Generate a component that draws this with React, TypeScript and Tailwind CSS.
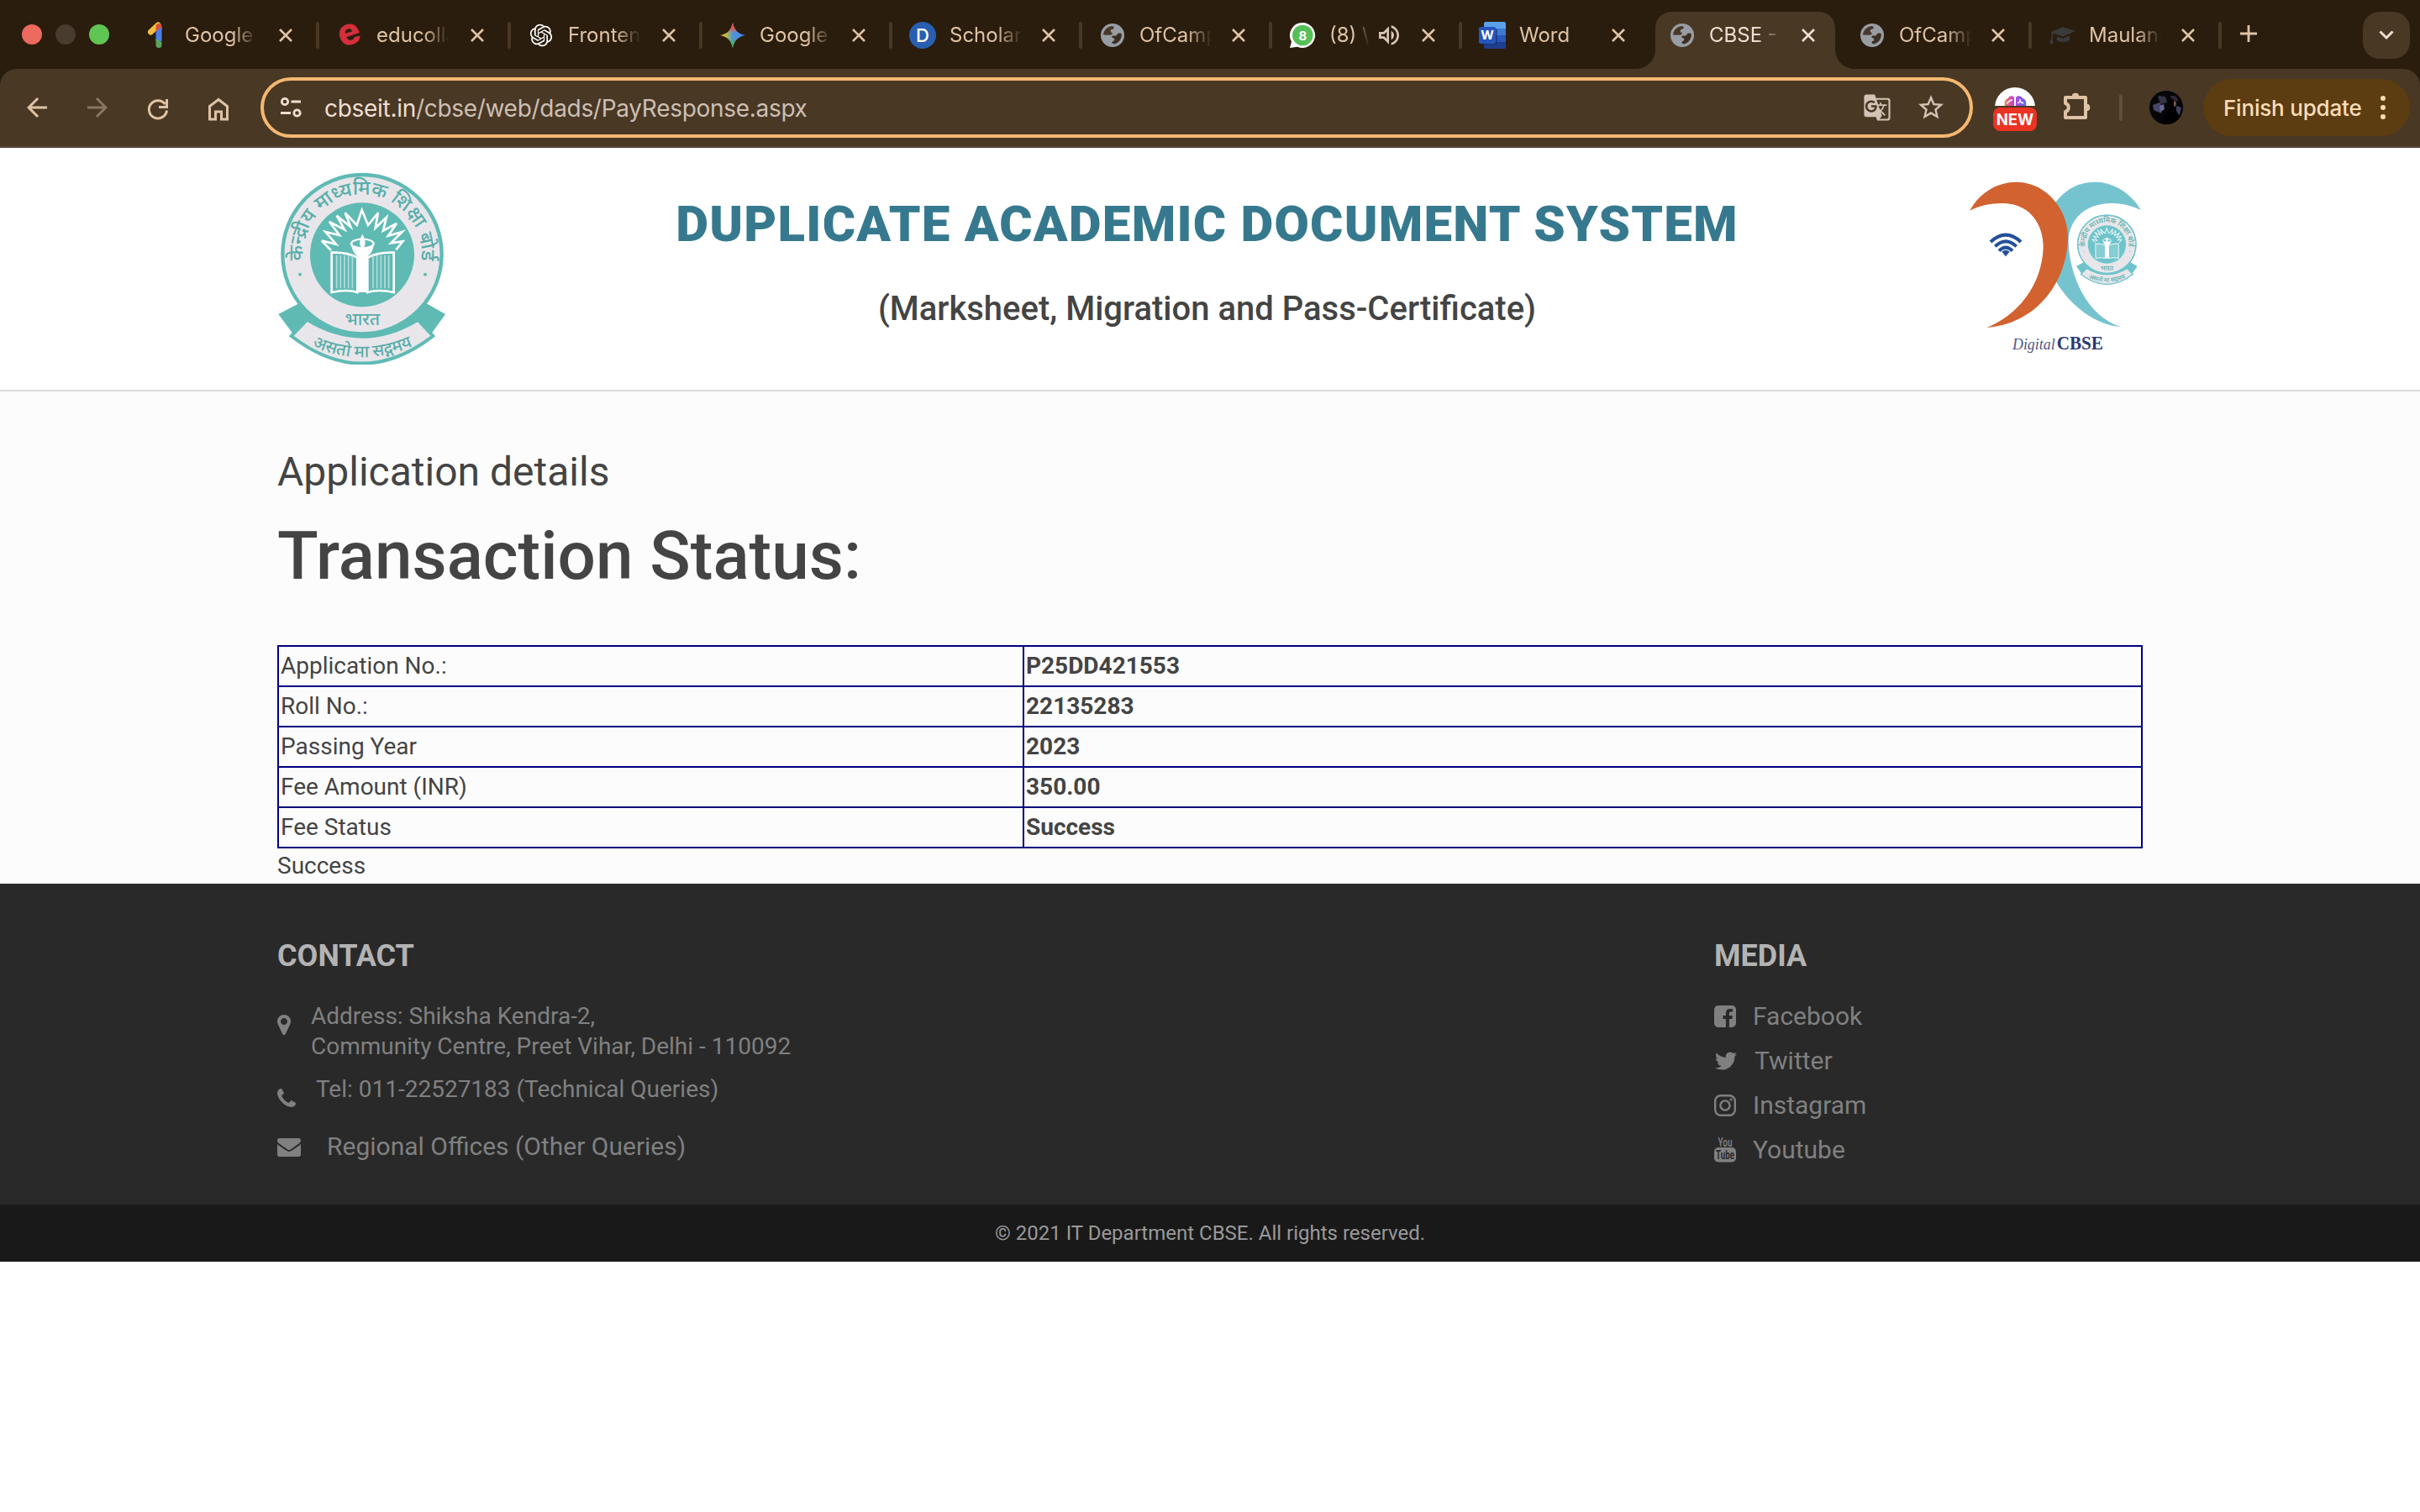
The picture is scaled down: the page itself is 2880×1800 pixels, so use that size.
import type { ReactNode } from 'react';
import { RiOpenaiFill } from 'react-icons/ri';
import { MdArrowBack, MdArrowForward, MdGTranslate, MdOutlineVolumeUp, MdStarBorder } from 'react-icons/md';

/* ---------- tab icons ---------- */

function GoogleOne() {
  return (
    <svg viewBox="0 0 32 32" className="size-8">
      <path d="M16 2.5 7.500 10.500" stroke="#f2bd42" strokeWidth="7" strokeLinecap="round" transform="translate(0 1.500)" />
      <path d="M13.500 12V5.500a3.500 3.500 0 0 1 7 0V9z" fill="#d94f3d" />
      <path d="M13.500 12 20.500 6v17h-7z" fill="#4a80ec" />
      <path d="M13.500 20 20.500 24v3.500a3.500 3.500 0 0 1-7 0z" fill="#58a65c" />
    </svg>
  );
}

function EducollaIcon() {
  return (
    <span className="flex size-8 -rotate-[18deg] items-center justify-center font-['Inter'] text-[44px] leading-[32px] font-extrabold text-[#d32f3c]">
      <span className="-mt-2.5">e</span>
    </span>
  );
}

function GeminiIcon() {
  return (
    <svg viewBox="0 0 32 32" className="size-8">
      <defs>
        <linearGradient id="gem" x1="0" y1="0" x2="1" y2="0">
          <stop offset="0" stopColor="#f2bd42" />
          <stop offset=".25" stopColor="#b8b94a" />
          <stop offset=".5" stopColor="#4f93d8" />
          <stop offset="1" stopColor="#4285f4" />
        </linearGradient>
        <linearGradient id="gemTop" x1="0" y1="0" x2="0" y2="1">
          <stop offset="0" stopColor="#e94b3c" />
          <stop offset=".22" stopColor="#e0564a" />
          <stop offset=".42" stopColor="#d96c6c" stopOpacity="0" />
          <stop offset=".6" stopColor="#4fae5b" stopOpacity="0" />
          <stop offset=".85" stopColor="#4fae5b" />
        </linearGradient>
      </defs>
      <path d="M16 1C18 10 22 14 31 16 22 18 18 22 16 31 14 22 10 18 1 16 10 14 14 10 16 1z" fill="url(#gem)" />
      <path d="M16 1C18 10 22 14 31 16 22 18 18 22 16 31 14 22 10 18 1 16 10 14 14 10 16 1z" fill="url(#gemTop)" />
    </svg>
  );
}

function LetterD() {
  return (
    <span className="flex size-8 items-center justify-center rounded-full bg-[#285fb0] font-['Inter'] text-[22px] leading-none font-medium text-white">
      D
    </span>
  );
}

function Globe() {
  return (
    <svg viewBox="0 0 32 32" className="size-8">
      <circle cx="16" cy="16" r="14" fill="#989da3" />
      <path d="M5 15.500C5.500 9.500 10 5.500 16 5l2 1.500-1.500 2.300-2.800.8.300 2.600 2.200 1.300-1.700 2-4 .200z" fill="#48382a" />
      <path d="M16 16.500h4.500l1.500-2.500 3-.800 1.800 1.300c.400 5.500-3 10.500-8.800 12l-2.500-1 .500-2.500 2.200-.500v-2.500l-3-1.500z" fill="#3c2f22" />
    </svg>
  );
}

function WhatsApp() {
  return (
    <svg viewBox="0 0 32 32" className="size-8">
      <path d="M16 1a15 15 0 1 1-6 28.700L1 31l2-7.500A15 15 0 0 1 16 1z" fill="#fff" />
      <circle cx="16.300" cy="16" r="12.300" fill="#57bf58" />
      <text x="16.300" y="21.500" textAnchor="middle" fontFamily="Inter" fontWeight="700" fontSize="15" fill="#fff">8</text>
    </svg>
  );
}

function WordIcon() {
  return (
    <svg viewBox="0 0 32 32" className="size-8">
      <path d="M8 0h22a2 2 0 0 1 2 2v6H6V2a2 2 0 0 1 2-2z" fill="#5aa1ea" />
      <path d="M6 8h26v8H6z" fill="#3b79d2" />
      <path d="M6 16h26v8H6z" fill="#2858b8" />
      <path d="M6 24h26v6a2 2 0 0 1-2 2H8a2 2 0 0 1-2-2z" fill="#1f3e8c" />
      <path d="M6 8h14a2 2 0 0 1 2 2v17H6z" fill="#14295f" opacity=".55" />
      <rect y="6" width="20" height="20" rx="2" fill="#2655ba" />
      <text x="10" y="21" textAnchor="middle" fontFamily="Inter" fontWeight="700" fontSize="15" fill="#fff">W</text>
    </svg>
  );
}

function GradCap() {
  return (
    <svg viewBox="0 0 32 32" className="size-8" fill="#3a3a39">
      <path d="M17 6 32 11 17 17.500 6 13.800 5 17 4.500 21 6 25l-3.500 2L1 24l2-4 .800-4L3 12z" />
      <path d="M10 17.500 17 20l8-3.500v5c-2 3-13 3.500-15.500 0z" />
    </svg>
  );
}

/* ---------- browser chrome ---------- */

function CloseIcon() {
  return (
    <svg viewBox="0 0 16 16" className="size-4 shrink-0" fill="none" stroke="currentColor" strokeWidth="2.600">
      <path d="M1 1l14 14M15 1 1 15" />
    </svg>
  );
}

type Tab = { title: string; icon: ReactNode; wide?: boolean; active?: boolean; audio?: boolean; noSep?: boolean };

const tabs: Tab[] = [
  { title: 'Google', icon: <GoogleOne />, wide: true },
  { title: 'educolla', icon: <EducollaIcon />, wide: true },
  { title: 'Frontend', icon: <RiOpenaiFill className="size-8 text-white" />, wide: true },
  { title: 'Google', icon: <GeminiIcon /> },
  { title: 'Scholar', icon: <LetterD /> },
  { title: 'OfCamp', icon: <Globe /> },
  { title: '(8) \\', icon: <WhatsApp />, audio: true },
  { title: 'Word', icon: <WordIcon />, noSep: true },
  { title: 'CBSE -', icon: <Globe />, active: true, noSep: true },
  { title: 'OfCamp', icon: <Globe /> },
  { title: 'Maulana', icon: <GradCap /> },
];

function TabItem({ tab }: { tab: Tab }) {
  return (
    <div
      className={`relative flex h-[82px] shrink-0 items-center pt-[2px] ${tab.wide ? 'w-[228px]' : 'w-[226px]'} ${
        tab.active ? 'text-[#f0ded2]' : 'text-[#dfc3a6]'
      }`}
    >
      {tab.active && (
        <svg viewBox="0 0 264 68" className="absolute top-[14px] -left-[18px] h-[68px] w-[264px]" fill="#483824">
          <path d="M0 68c14 0 24-10 24-24V20C24 8 32 0 44 0h174c12 0 20 8 20 20v24c0 14 10 24 24 24z" />
        </svg>
      )}
      <div className="relative ml-[22px] flex w-8 shrink-0">{tab.icon}</div>
      <div
        className={`relative ml-4 shrink-0 overflow-hidden whitespace-nowrap font-['Inter'] text-2xl ${
          tab.audio
            ? 'w-[48px] [mask-image:linear-gradient(to_right,black_60%,transparent)]'
            : 'w-[88px] [mask-image:linear-gradient(to_right,black_64%,transparent_98%)]'
        }`}
      >
        {tab.title}
      </div>
      {tab.audio && <MdOutlineVolumeUp className="ml-[7px] size-8 shrink-0 text-[#d9c6b6]" />}
      <div className={`relative ${tab.audio ? 'ml-[23px]' : tab.wide ? 'ml-6' : 'ml-[22px]'}`}>
        <CloseIcon />
      </div>
      {!tab.noSep && <span className="absolute top-[26px] -right-[2px] h-8 w-1 rounded-full bg-[#483824]" />}
    </div>
  );
}

function TabStrip() {
  return (
    <div className="flex h-[82px] items-start bg-[#2a1d0d]">
      <div className="flex h-[82px] w-[150px] shrink-0 items-center gap-4 pl-[26px]">
        <span className="size-6 rounded-full bg-[#ed6a5e]" />
        <span className="size-6 rounded-full bg-[#483c2e]" />
        <span className="size-6 rounded-full bg-[#61c554]" />
      </div>
      {tabs.map((t, i) => (
        <TabItem key={i} tab={t} />
      ))}
      <svg viewBox="0 0 20 20" className="mt-[30px] ml-6 size-5" stroke="#dfc3a6" strokeWidth="2.800">
        <path d="M10 0v20M0 10h20" />
      </svg>
      <div className="mt-[14px] mr-3 ml-auto flex h-14 w-14 items-center justify-center rounded-[20px] bg-[#483824]">
        <svg viewBox="0 0 18 12" className="h-3 w-[18px]" fill="none" stroke="#f0ded2" strokeWidth="3">
          <path d="M1.500 1.500 9 9l7.500-7.500" />
        </svg>
      </div>
    </div>
  );
}

function ReloadIcon() {
  return (
    <svg viewBox="0 0 28 28" className="mt-[3px] size-7" fill="none" stroke="currentColor" strokeWidth="3">
      <path d="M24.500 15.500A10.600 10.600 0 1 1 22.500 8" />
      <path d="M24.500 2v9.500H15" />
    </svg>
  );
}

function HomeIcon() {
  return (
    <svg viewBox="0 0 28 28" className="mt-[3px] size-7" fill="none" stroke="currentColor" strokeWidth="3">
      <path d="M3.500 10.500 14 2.500l10.500 8V26h-7v-9h-7v9h-7z" />
    </svg>
  );
}

function TuneIcon() {
  return (
    <svg viewBox="0 0 26 26" className="size-[26px]" fill="none" stroke="#f0ded2" strokeWidth="2.800">
      <circle cx="6" cy="6" r="3.700" />
      <path d="M13.500 6H25M1 19.500h12" />
      <circle cx="20.500" cy="19.500" r="3.700" />
    </svg>
  );
}

function PuzzleIcon() {
  return (
    <svg viewBox="0 0 36 36" className="size-9">
      <path
        d="M6 8h24v24H6v-7a5.200 5.200 0 0 0 0-10z"
        fill="none"
        stroke="#dfc3a6"
        strokeWidth="4"
        strokeLinejoin="round"
      />
      <path d="M14 7a4 4 0 0 1 8 0zM31 16a4 4 0 0 1 0 8z" fill="#dfc3a6" stroke="#dfc3a6" />
    </svg>
  );
}

function ExtensionBadge() {
  return (
    <div className="flex w-[52px] flex-col items-center">
      <div className="h-[22px] w-12 overflow-hidden">
        <svg viewBox="0 0 48 22" className="h-[22px] w-12">
          <defs>
            <linearGradient id="brain" x1="0" x2="1">
              <stop offset="0" stopColor="#e8894a" />
              <stop offset=".4" stopColor="#c63fd8" />
              <stop offset="1" stopColor="#5b6df0" />
            </linearGradient>
          </defs>
          <circle cx="24" cy="24" r="24" fill="#fff" />
          <path d="M23 22V12c-2-3-7-2-7 1-4 1-5 5-4 9zM25 22V12c2-3 7-2 8 1 4 1 5 5 4 9z" fill="url(#brain)" />
          <path d="M14 19c3-1 3-4 7-4M30 14v3l-3 2M30 17l4 2" fill="none" stroke="#fff" strokeWidth="1.400" />
        </svg>
      </div>
      <div className="mt-0.5 flex h-7 w-[52px] items-center justify-center rounded-lg bg-[#e93323] font-['Inter'] text-[18.5px] leading-none font-bold text-white">
        NEW
      </div>
    </div>
  );
}

function Avatar() {
  return (
    <svg viewBox="0 0 40 40" className="size-10">
      <defs>
        <clipPath id="av">
          <circle cx="20" cy="20" r="20" />
        </clipPath>
        <filter id="avb">
          <feGaussianBlur stdDeviation=".6" />
        </filter>
      </defs>
      <g clipPath="url(#av)">
        <rect width="40" height="40" fill="#060508" />
        <g filter="url(#avb)">
          <path d="M10 6l9 1 2 7-8 2z" fill="#35324a" />
          <path d="M4 17l8-3 4 6-2 7-9-4z" fill="#474569" />
          <path d="M12 18l5-2 1 6-5 3z" fill="#6a6a94" />
          <path d="M32 18l6 2-2 9-4-3z" fill="#423f62" />
          <path d="M24 6l7 0 4 6-6 1z" fill="#2e2734" />
          <path d="M24 12c3-3 7-1 6 4l-1 5c5 3 6 10 7 19H16c1-9 4-14 8-18z" fill="#000" />
          <path d="M29 12l3 2-1 5-2-1z" fill="#7d5856" />
        </g>
      </g>
    </svg>
  );
}

function Toolbar() {
  return (
    <div className="bg-[#2a1d0d]">
      <div className="flex h-[94px] items-center rounded-t-[20px] border-b-2 border-[#54463a] bg-[#483824] text-[#dfc3a6]">
        <div className="ml-2 flex shrink-0">
          <span className="flex w-[72px] items-center justify-center"><MdArrowBack className="size-9" /></span>
          <span className="flex w-[72px] items-center justify-center text-[#8a7560]"><MdArrowForward className="size-9" /></span>
          <span className="flex w-[72px] items-center justify-center"><ReloadIcon /></span>
          <span className="flex w-[72px] items-center justify-center"><HomeIcon /></span>
        </div>
        <div className="ml-[14px] flex h-[72px] w-[2038px] shrink-0 items-center rounded-full border-4 border-[#f5b871] pl-[19px]">
          <TuneIcon />
          <div className="mt-px ml-[27px] whitespace-nowrap font-['Inter'] text-[28px] leading-none tracking-[-0.3px] text-[#cdbfb4]">
            <span className="text-[#f0ded2]">cbseit.in</span>/cbse/web/dads/PayResponse.aspx
          </div>
          <MdGTranslate className="mr-[29px] ml-auto size-[34px] text-[#d3c3b6]" />
          <MdStarBorder className="mr-[28px] size-9 text-[#d3c3b6]" />
        </div>
        <div className="mt-1 ml-6"><ExtensionBadge /></div>
        <div className="-mt-1 ml-7"><PuzzleIcon /></div>
        <span className="ml-[34px] h-8 w-1 rounded-full bg-[#614e3b]" />
        <div className="ml-8"><Avatar /></div>
        <div className="ml-6 flex h-[68px] w-[246px] items-center rounded-full bg-[#5c3d11] pl-6 font-['Inter'] text-[26px] leading-none font-medium tracking-[-0.2px] whitespace-nowrap text-[#fbdcb9]">
          <span className="mt-px">Finish update</span>
          <span className="mr-[29px] ml-auto flex flex-col gap-[5px]">
            <i className="size-[6px] rounded-full bg-[#fbdcb9]" />
            <i className="size-[6px] rounded-full bg-[#fbdcb9]" />
            <i className="size-[6px] rounded-full bg-[#fbdcb9]" />
          </span>
        </div>
      </div>
    </div>
  );
}

/* ---------- page logos ---------- */

function EmblemArt({ id, teal }: { id: string; teal: string }) {
  const font = "'Noto Sans', 'Noto Sans Devanagari', sans-serif";
  return (
    <>
      <defs>
        <path id={`${id}-top`} d="M167 418A212 212 0 1 1 559 418" />
        <path id={`${id}-bot`} d="M144 646Q363 766 584 646" />
      </defs>
      <path d="M64 552 140 512 590 512 660 552 606 628 120 628z" fill={teal} />
      <circle cx="363" cy="338" r="284" fill="#e8e6ea" stroke={teal} strokeWidth="13" />
      <path d="M150 526Q363 722 578 526L600 566Q363 706 126 566z" fill={teal} />
      <path
        d="M166 572Q363 692 562 572L616 630Q363 826 110 630z"
        fill="#e8e6ea"
        stroke={teal}
        strokeWidth="12"
      />
      <circle cx="363" cy="340" r="186" fill={teal} />
      <path
        d="M218 290 270 302 232 258 282 270 246 222 300 250 272 200 322 240 302 190 344 234 362 180 384 234 420 190 410 244 450 206 438 254 486 228 456 272 506 258 466 298 508 292 484 322 M218 290 252 324"
        fill="none"
        stroke="#fff"
        strokeWidth="8"
      />
      <path d="M254 332Q310 330 346 350V474Q310 462 254 474z" fill={teal} stroke="#fff" strokeWidth="8" />
      <path d="M476 332Q420 330 382 350V474Q420 462 476 474z" fill={teal} stroke="#fff" strokeWidth="8" />
      {[272, 286, 300, 314, 328, 402, 416, 430, 444, 458].map((x) => (
        <path key={x} d={`M${x} 342V460`} stroke="#b5dcdb" strokeWidth="5" />
      ))}
      <path d="M322 300Q330 335 346 345V474H382V345Q400 335 406 300z" fill="#fff" />
      <ellipse cx="364" cy="300" rx="40" ry="16" fill={teal} stroke="#fff" strokeWidth="7" />
      <path d="M364 266C350 290 352 312 364 314 376 312 378 290 364 266z" fill="#fff" />
      <circle cx="141" cy="410" r="6" fill={teal} />
      <circle cx="588" cy="410" r="6" fill={teal} />
      <g fill="#57aea9" fontFamily={font} fontWeight="500">
        <text fontSize="70">
          <textPath href={`#${id}-top`} startOffset="50%" textAnchor="middle">
            केन्द्रीय माध्यमिक शिक्षा बोर्ड
          </textPath>
        </text>
        <text x="364" y="590" fontSize="62" textAnchor="middle">भारत</text>
        <text fontSize="60">
          <textPath href={`#${id}-bot`} startOffset="50%" textAnchor="middle">असतो मा सद्गमय</textPath>
        </text>
      </g>
    </>
  );
}

function CbseEmblem() {
  return (
    <svg viewBox="60 48 600 684" className="h-[228px] w-[200px] shrink-0">
      <EmblemArt id="big" teal="#5fbab4" />
    </svg>
  );
}

function DigitalLogo() {
  return (
    <svg viewBox="70 45 615 630" className="h-[210px] w-[205px] shrink-0">
      <path
        d="M380 122C430 60 480 50 525 50 590 52 650 90 684 150 640 130 610 126 575 126 480 128 426 190 426 262 428 380 490 530 614 568 520 560 430 490 380 402z"
        fill="#76c3d0"
      />
      <path
        d="M74 152C110 85 175 50 240 50 340 50 424 140 424 250 420 420 300 560 134 570 240 530 334 420 336 280 334 190 280 126 190 126 145 126 105 136 74 152z"
        fill="#d2622f"
      />
      <g fill="none" stroke="#23509a" strokeWidth="12">
        <path d="M148 264Q202 214 256 264" />
        <path d="M164 280Q202 244 240 280" />
        <path d="M178 296Q202 272 226 296" />
      </g>
      <path d="M188 299Q202 288 216 299L202 316z" fill="#23509a" />
      <svg x="452" y="163" width="220" height="257" viewBox="60 48 600 684">
        <EmblemArt id="small" teal="#6fc4cc" />
      </svg>
      <text x="226" y="648" fontFamily="'Liberation Serif', serif" fontStyle="italic" fontSize="56" fill="#4d5686" textLength="152" lengthAdjust="spacingAndGlyphs">
        Digital
      </text>
      <text x="384" y="647" fontFamily="'Liberation Serif', serif" fontWeight="700" fontSize="68" fill="#2b3873" textLength="166" lengthAdjust="spacingAndGlyphs">
        CBSE
      </text>
    </svg>
  );
}

/* ---------- page ---------- */

function PageHeader() {
  return (
    <header className="flex h-[290px] border-b-2 border-[#dcdcdc] bg-white px-[330px]">
      <div className="mt-[30px]"><CbseEmblem /></div>
      <div className="flex-1 pt-[58px] text-center">
        <h1 className="text-[60px] leading-[66px] font-black tracking-[1.2px] text-[#36798e]">
          DUPLICATE ACADEMIC DOCUMENT SYSTEM
        </h1>
        <h2 className="mt-[46px] text-[40px] leading-[44px] font-medium">(Marksheet, Migration and Pass-Certificate)</h2>
      </div>
      <div className="mt-[39px] mr-0.5"><DigitalLogo /></div>
    </header>
  );
}

const rows = [
  ['Application No.:', 'P25DD421553'],
  ['Roll No.:', '22135283'],
  ['Passing Year', '2023'],
  ['Fee Amount (INR)', '350.00'],
  ['Fee Status', 'Success'],
];

function Details() {
  return (
    <main className="h-[586px] bg-[#fcfcfc] px-[330px] pt-[70px]">
      <h3 className="text-5xl leading-[52px]">Application details</h3>
      <h2 className="mt-[30px] text-[80px] leading-[88px] font-medium">Transaction Status:</h2>
      <div className="mt-[62px] border-x-2 border-t-2 border-[#000080] text-[28px] leading-[46px]">
        {rows.map(([label, value]) => (
          <div key={label} className="flex h-12 border-b-2 border-[#000080]">
            <div className="w-[885px] pl-0.5">{label}</div>
            <div className="flex-1 border-l-2 border-[#000080] pl-0.5 font-bold">{value}</div>
          </div>
        ))}
      </div>
      <p className="mt-px text-[28px] leading-10">Success</p>
    </main>
  );
}

function Glyph({ d, box, className }: { d: string; box: string; className: string }) {
  return (
    <svg viewBox={box} className={className} fill="currentColor">
      <path d={d} />
    </svg>
  );
}

const PIN =
  'M1152 640q0-106-75-181t-181-75-181 75-75 181 75 181 181 75 181-75 75-181zm256 0q0 109-33 179l-364 774q-16 33-47.500 52t-67.500 19-67.500-19-46.500-52l-365-774q-33-70-33-179 0-212 150-362t362-150 362 150 150 362z';
const PHONE =
  'M1600 1240q0 27-10 70.500t-21 68.500q-21 50-122 106-94 51-186 51-27 0-53-3.500t-57.500-12.500-47-14.500-55.500-20.500-49-18q-98-35-175-83-127-79-264-216t-216-264q-48-77-83-175-3-9-18-49t-20.500-55.500-14.500-47-12.500-57.500-3.500-53q0-92 51-186 56-101 106-122 25-11 68.500-21t70.500-10q14 0 21 3 18 6 53 76 11 19 30 54t35 63.500 31 53.500q3 4 17.500 25t21.500 35.500 7 28.500q0 20-28.500 50t-62 55-62 53-28.500 46q0 9 5 22.500t8.500 20.500 14 24 11.500 19q76 137 174 235t235 174q2 1 19 11.500t24 14 20.500 8.500 22.500 5q18 0 46-28.500t53-62 55-62 50-28.500q14 0 28.500 7t35.500 21.500 25 17.500q25 15 53.500 31t63.500 35 54 30q70 35 76 53 3 7 3 21z';
const MAIL =
  'M1792 710v794q0 66-47 113t-113 47h-1472q-66 0-113-47t-47-113v-794q44 49 101 87 362 246 497 345 57 42 92.500 65.500t94.500 48 110 24.500h2q51 0 110-24.500t94.500-48 92.500-65.500q170-123 498-345 57-39 100-87zm0-294q0 79-49 151t-122 123q-376 261-468 325-10 7-42.500 31t-54 38.500-52 32.500-57.500 27-50 9h-2q-23 0-50-9t-57.500-27-52-32.500-54-38.500-42.500-31q-91-64-262-182.500t-205-142.500q-62-42-117-115.500t-55-136.500q0-78 41.500-130t118.500-52h1472q65 0 112.500 47t47.500 113z';
const FACEBOOK =
  'M1376 128q119 0 203.500 84.500t84.500 203.500v960q0 119-84.500 203.500t-203.500 84.500h-188v-595h199l30-232h-229v-148q0-56 23.500-84t91.500-28l122-1v-207q-63-9-178-9-136 0-217.500 80t-81.500 226v171h-200v232h200v595h-532q-119 0-203.500-84.500t-84.500-203.500v-960q0-119 84.500-203.500t203.500-84.500h960z';
const TWITTER =
  'M1684 408q-67 98-162 167 1 14 1 42 0 130-38 259.500t-115.500 248.500-184.500 210.500-258 146-323 54.500q-271 0-496-145 35 4 78 4 225 0 401-138-105-2-188-64.500t-114-159.500q33 5 61 5 43 0 85-11-112-23-185.500-111.500t-73.500-205.500v-4q68 38 146 41-66-44-105-115t-39-154q0-88 44-163 121 149 294.500 238.500t371.500 99.500q-8-38-8-74 0-134 94.500-228.500t228.500-94.500q140 0 236 102 109-21 205-78-37 115-142 178 93-10 186-50z';

function InstagramGlyph() {
  return (
    <svg viewBox="0 0 26 26" className="size-[26px]" fill="none" stroke="currentColor" strokeWidth="2.400">
      <rect x="1.200" y="1.200" width="23.600" height="23.600" rx="6.500" />
      <circle cx="13" cy="13" r="5.600" />
      <circle cx="20" cy="6" r="1.600" fill="currentColor" stroke="none" />
    </svg>
  );
}

function YoutubeGlyph() {
  return (
    <svg viewBox="0 0 26 32" className="-mt-0.5 h-8 w-[26px]" fill="currentColor" fontFamily="Roboto">
      <text x="4.500" y="12.500" fontSize="15" fontWeight="600" textLength="17" lengthAdjust="spacingAndGlyphs">You</text>
      <rect y="14" width="26" height="17.500" rx="5" />
      <text x="2" y="28" fontSize="15" fontWeight="700" fill="#292929" textLength="22" lengthAdjust="spacingAndGlyphs">Tube</text>
    </svg>
  );
}

const media = [
  { name: 'Facebook', icon: <Glyph d={FACEBOOK} box="128 128 1536 1536" className="size-[26px]" />, gap: '' },
  { name: 'Twitter', icon: <Glyph d={TWITTER} box="108 256 1576 1280" className="ml-px h-[22px] w-[27px]" />, gap: 'pl-0.5' },
  { name: 'Instagram', icon: <InstagramGlyph />, gap: '' },
  { name: 'Youtube', icon: <YoutubeGlyph />, gap: '' },
];

function PageFooter() {
  return (
    <footer>
      <div className="flex h-[382px] justify-between bg-[#292929] px-[330px] pt-16 text-[28px] leading-9 text-[#808080]">
        <div>
          <h4 className="text-4xl leading-[44px] font-bold text-[#b3b3b3]">CONTACT</h4>
          <div className="mt-8 flex">
            <Glyph d={PIN} box="384 128 1024 1536" className="mt-4 h-6 w-4" />
            <p className="ml-6">
              Address: Shiksha Kendra-2,
              <br />
              Community Centre, Preet Vihar, Delhi - 110092
            </p>
          </div>
          <div className="mt-[15px] flex">
            <Glyph d={PHONE} box="192 128 1408 1408" className="mt-[17px] size-[22px]" />
            <p className="ml-6">Tel: 011-22527183 (Technical Queries)</p>
          </div>
          <div className="mt-[29px] flex text-[30px]">
            <Glyph d={MAIL} box="0 256 1792 1408" className="mt-[8px] h-[22px] w-7" />
            <p className="ml-[31px]">Regional Offices (Other Queries)</p>
          </div>
        </div>
        <div className="w-[510px]">
          <h4 className="text-4xl leading-[44px] font-bold text-[#b3b3b3]">MEDIA</h4>
          <ul className="mt-[23px] text-[30px]">
            {media.map((m) => (
              <li key={m.name} className="flex h-[53px] items-center">
                <span className="flex w-[27px]">{m.icon}</span>
                <span className={`ml-[19px] ${m.gap}`}>{m.name}</span>
              </li>
            ))}
          </ul>
        </div>
      </div>
      <div className="flex h-[68px] items-center justify-center bg-[#191919] text-2xl text-[#999]">
        © 2021 IT Department CBSE. All rights reserved.
      </div>
    </footer>
  );
}

export default function App() {
  return (
    <div className="h-[1800px] w-[2880px] overflow-hidden bg-white">
      <TabStrip />
      <Toolbar />
      <div className="font-['Roboto'] text-[#444]">
        <PageHeader />
        <Details />
        <PageFooter />
      </div>
    </div>
  );
}
